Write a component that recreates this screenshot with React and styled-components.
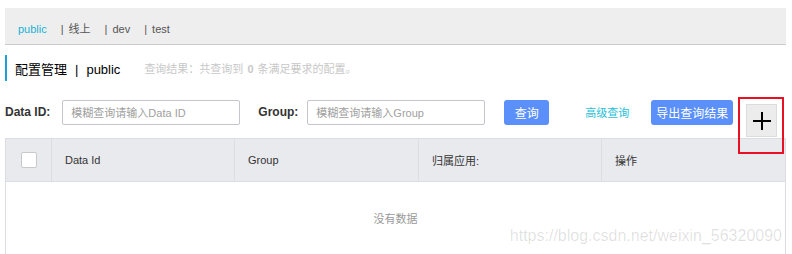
import React from "react";
import styled, { createGlobalStyle } from "styled-components";

const GlobalStyle = createGlobalStyle`
  body {
    margin: 0;
    background: #fff;
    font-family: "Liberation Sans", "Noto Sans CJK SC", sans-serif;
    color: #333;
  }
`;

const Page = styled.div`
  position: relative;
  width: 781px;
  padding: 8px 0 0 5px;
  height: 246px;
  overflow: hidden;
`;

const TabBar = styled.div`
  height: 37px;
  background: #eeeeee;
  border-bottom: 1px solid #cccccc;
  display: flex;
  align-items: center;
  padding: 5px 0 0 13px;
  box-sizing: border-box;
  font-size: 11px;
`;

const Tab = styled.span`
  color: ${(p) => (p.$active ? "#1ab2d5" : "#555")};
  margin-right: 14px;
  line-height: 14px;
  white-space: nowrap;
`;

const Sep = styled.span`
  color: #555;
  margin-right: 5px;
`;

const TitleRow = styled.div`
  margin-top: 10px;
  height: 26px;
  display: flex;
  align-items: center;
  border-left: 2px solid #1a9fd6;
  padding-left: 8px;
  white-space: nowrap;
`;

const Title = styled.span`
  font-size: 13px;
  color: #000;
`;

const TitleSep = styled.span`
  margin: 0 8px;
  color: #000;
`;

const Summary = styled.span`
  margin-left: 24px;
  font-size: 11px;
  color: #c8c8c8;

  strong {
    font-weight: bold;
    margin: 0 4px;
  }
`;

const SearchRow = styled.div`
  margin-top: 19px;
  display: flex;
  align-items: flex-start;
  white-space: nowrap;

  & > * {
    flex-shrink: 0;
  }
`;

const Label = styled.label`
  height: 25px;
  line-height: 25px;
  font-size: 12px;
  font-weight: bold;
  color: #333;
  margin-right: ${(p) => p.$right}px;
  margin-left: ${(p) => p.$left || 0}px;
`;

const Input = styled.input`
  width: 178px;
  height: 25px;
  box-sizing: border-box;
  border: 1px solid #c4c6cc;
  border-radius: 2px;
  padding: 0 8px;
  font-size: 11px;
  font-family: "Liberation Sans", "Noto Sans CJK SC", sans-serif;
  outline: none;

  &::placeholder {
    color: #a0a0a0;
  }
`;

const Button = styled.button`
  height: 25px;
  width: ${(p) => p.$w}px;
  margin-left: ${(p) => p.$ml}px;
  border: none;
  border-radius: 3px;
  background: #5b8ff9;
  color: #fff;
  font-size: 12px;
  font-family: "Noto Sans CJK SC", sans-serif;
  padding: 0;
  cursor: pointer;
`;

const LinkText = styled.a`
  height: 25px;
  line-height: 25px;
  margin-left: 36px;
  color: #1ec0d8;
  font-size: 11px;
  font-family: "Noto Sans CJK SC", sans-serif;
  cursor: pointer;
`;

const PlusWrap = styled.div`
  position: relative;
  margin: 4px 0 0 13px;

  &::after {
    content: "";
    position: absolute;
    left: -8px;
    right: -7px;
    top: -7px;
    bottom: -17px;
    border: 2px solid #e81123;
    pointer-events: none;
    z-index: 2;
  }
`;

const PlusButton = styled.button`
  width: 31px;
  height: 33px;
  background: #ececec;
  border: 1px solid #dcdcdc;
  display: flex;
  align-items: center;
  justify-content: center;
  padding: 0;
`;

const Table = styled.div`
  margin-top: 1px;
  border-left: 1px solid #dcdde2;
  border-right: 1px solid #dcdde2;
`;

const HeadRow = styled.div`
  display: grid;
  grid-template-columns: 45px 183px 184px 183px 1fr;
  height: 42px;
  background: #e9eaee;
  border-top: 1px solid #dcdde2;
  border-bottom: 1px solid #dcdde2;
`;

const HeadCell = styled.div`
  display: flex;
  align-items: center;
  justify-content: ${(p) => (p.$center ? "center" : "flex-start")};
  padding-left: ${(p) => (p.$center ? 0 : 13)}px;
  font-size: 11px;
  color: #333;
  border-left: ${(p) => (p.$first ? "none" : "1px solid #dcdde2")};
`;

const Check = styled.span`
  width: 14px;
  height: 14px;
  background: #fff;
  border: 1px solid #c8c9cc;
  border-radius: 2px;
`;

const Empty = styled.div`
  height: 80px;
  display: flex;
  justify-content: center;
  padding-top: 28px;
  box-sizing: border-box;
  font-size: 11px;
  color: #999;
`;

const Watermark = styled.div`
  position: absolute;
  right: 4px;
  bottom: 9px;
  font-family: "Liberation Sans", sans-serif;
  font-size: 16px;
  color: rgba(0, 0, 0, 0.13);
  pointer-events: none;
`;

export default function App() {
  return (
    <>
      <GlobalStyle />
      <Page>
        <TabBar>
          <Tab $active>public</Tab>
          <Tab><Sep>|</Sep>线上</Tab>
          <Tab><Sep>|</Sep>dev</Tab>
          <Tab><Sep>|</Sep>test</Tab>
        </TabBar>

        <TitleRow>
          <Title>
            配置管理<TitleSep>|</TitleSep>public
          </Title>
          <Summary>
            查询结果：共查询到<strong>0</strong>条满足要求的配置。
          </Summary>
        </TitleRow>

        <SearchRow>
          <Label $right={12}>Data ID:</Label>
          <Input placeholder="模糊查询请输入Data ID" />
          <Label $left={18} $right={9}>Group:</Label>
          <Input placeholder="模糊查询请输入Group" />
          <Button $w={45} $ml={19}>查询</Button>
          <LinkText>高级查询</LinkText>
          <Button $w={82} $ml={22}>导出查询结果</Button>
          <PlusWrap>
            <PlusButton>
              <svg width="20" height="20" viewBox="0 0 20 20">
                <path d="M10 1v18M1 10h18" stroke="#000" strokeWidth="2" fill="none" />
              </svg>
            </PlusButton>
          </PlusWrap>
        </SearchRow>

        <Table>
          <HeadRow>
            <HeadCell $first $center><Check /></HeadCell>
            <HeadCell>Data Id</HeadCell>
            <HeadCell>Group</HeadCell>
            <HeadCell>归属应用:</HeadCell>
            <HeadCell>操作</HeadCell>
          </HeadRow>
          <Empty>没有数据</Empty>
        </Table>

        <Watermark>https://blog.csdn.net/weixin_56320090</Watermark>
      </Page>
    </>
  );
}
